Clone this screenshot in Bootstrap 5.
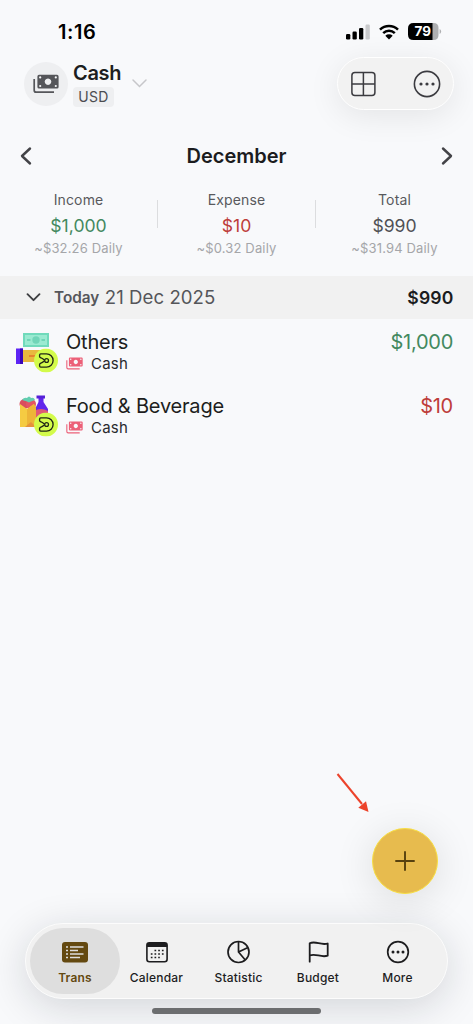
<!DOCTYPE html>
<html lang="en">
<head>
<meta charset="utf-8">
<meta name="viewport" content="width=device-width, initial-scale=1">
<title>Cash – December</title>
<link href="https://cdn.jsdelivr.net/npm/bootstrap@5.3.0/dist/css/bootstrap.min.css" rel="stylesheet">
<style>
  body { background: #f8f9fb; font-family: Inter, sans-serif; color: #1d1e20; overflow: hidden; }
  .phone { width: 473px; height: 1024px; overflow: hidden; }
  .phone svg { display: block; flex: none; overflow: visible; }
  .lh { line-height: 1; white-space: nowrap; }

  .status { height: 57px; padding: 6px 32px 0 58px; color: #000; }
  .clock { font-size: 20px; font-weight: 600; letter-spacing: .55px; }
  .wifi { margin: 0 9px; }
  .top { height: 53px; padding: 0 19px 0 24px; }
  .avatar { width: 44px; height: 44px; background: #eeeff1; color: #55565a; }
  .account { margin-left: 5px; padding-top: 2px; }
  .wallet { font-size: 20px; font-weight: 600; letter-spacing: -.3px; }
  .currency { font-size: 14px; background: #eeeff1; color: #4b4c50; border-radius: 4px; height: 20px; width: 41px; letter-spacing: .3px; }
  .caret { margin-left: 11px; }
  .tools { width: 117px; height: 53px; background: #f2f2f2; border: 1.5px solid #fff; color: #3b3b40; padding: 0 12px; box-shadow: 0 6px 32px rgba(0,0,0,.085); }

  .month { height: 44px; margin-top: 24px; padding: 0 20px; color: #434347; }
  .month-name { font-size: 20px; font-weight: 600; color: #1b1c1e; letter-spacing: -.02px; }
  .stats { height: 98px; padding-top: 15px; }
  .rule { width: 1px; height: 28px; background: #dcdddf; margin-top: 7px; }
  .stat-label { font-size: 14px; color: #58595d; letter-spacing: .15px; }
  .stat-value { font-size: 17.6px; color: #505155; margin-top: 10px; }
  .stat-daily { font-size: 13px; color: #a5a6a9; margin-top: 7px; letter-spacing: .15px; }
  .stat-value.in, .amount.in { color: #43895f; }
  .stat-value.out, .amount.out { color: #be3d3a; }

  .day { height: 43px; background: #f1f1f1; padding: 0 20px 0 26px; color: #55565a; }
  .day-today { font-size: 15.3px; font-weight: 600; margin-left: 13px; }
  .day-date { font-size: 18.6px; margin-left: 5.500px; letter-spacing: .05px; }
  .day-total { font-size: 17.6px; font-weight: 600; color: #1b1c1e; letter-spacing: .15px; margin-right: -.5px; }

  .entry { height: 63.5px; padding: 0 20px 0 15px; }
  .entry-pic { width: 51px; height: 46px; }
  .entry-name { font-size: 20px; letter-spacing: -.2px; margin-top: 13px; }
  .entry-wallet { font-size: 15px; margin-top: 4px; color: #2a2b2e; letter-spacing: .2px; }
  .amount { font-size: 20px; margin-top: 13px; letter-spacing: -.25px; }

  .fab { right: 35px; top: 828px; width: 66px; height: 66px; background: #e7bb4e; border: 1.5px solid #f8df43; color: #57410f; box-shadow: 0 6px 40px rgba(0,0,0,.12); }
  .pointer { left: 335px; top: 771px; }

  .tabs { width: 423px; height: 76px; margin: 0 auto 9px; background: #f1f1f1; border: 1.5px solid #fcfcfc; box-shadow: 0 8px 40px rgba(20,25,35,.16); padding: 4px; }
  .tab { height: 66px; color: #1d1d1f; font-size: 12px; font-weight: 500; letter-spacing: .2px; padding-top: 11px; }
  .tab svg { margin-bottom: 7px; }
  .tab.on { background: #dedede; color: #644910; font-weight: 600; }
  .home-bar { width: 169px; height: 6px; background: #6b6d6f; margin: 0 auto 10px; }
</style>
</head>
<body>
<svg width="0" height="0" class="position-absolute" aria-hidden="true">
  <symbol id="notes" viewBox="0 0 26 20">
    <path d="M1.200 5v11.200q0 2 2 2H21" fill="none" stroke="currentColor" stroke-width="1.700"/>
    <path fill-rule="evenodd" fill="currentColor" d="M6 .8h18q1.600 0 1.600 1.600v10.500q0 1.600-1.600 1.600h-18q-1.600 0-1.600-1.600v-10.500q0-1.600 1.600-1.600zM15 4.400a3.300 3.300 0 1 0 .01 0z"/>
    <g fill="#f8f9fb"><circle cx="7.200" cy="3.400" r="1.100"/><circle cx="22.800" cy="3.400" r="1.100"/><circle cx="7.200" cy="12" r="1.100"/><circle cx="22.800" cy="12" r="1.100"/></g>
  </symbol>
  <symbol id="coin" viewBox="0 0 24 24">
    <circle cx="12" cy="12" r="12" fill="#d3fb4b"/>
    <path d="M5.600 8V6.500q0-1.100 1.100-1.100h5.800a6.600 6.600 0 0 1 0 13.200H6.700q-1.100 0-1.100-1.100V16q0-.8.800-1.100 2.200-.8 3.600-2.100 1.200-1.200 2.300-1.200M5.600 8q0 .8.800 1.100 2.200.8 3.600 2.100 1.200 1.600 2.300 1.600" fill="none" stroke="#222817" stroke-width="1.350" stroke-linejoin="round"/>
    <circle cx="12.600" cy="12" r="1.900" fill="#d3fb4b" stroke="#222817" stroke-width="1.300"/>
  </symbol>
</svg>

<main class="phone position-relative d-flex flex-column">
  <div class="status d-flex align-items-center justify-content-between">
    <div class="clock lh">1:16</div>
    <div class="d-flex align-items-center">
      <svg width="24" height="16" viewBox="0 0 24 16"><rect x="0" y="10" width="4.300" height="5.500" rx="1.200"/><rect x="6.500" y="7.500" width="4.300" height="8" rx="1.200"/><rect x="13" y="4" width="4.300" height="11.500" rx="1.200"/><rect x="19.500" y=".5" width="4.300" height="15" rx="1.200" fill="#c9cacc"/></svg>
      <svg width="20" height="16" viewBox="0 0 20 16" class="wifi"><path d="M1 5.600a13 13 0 0 1 18 0M4.200 9.100a8.400 8.400 0 0 1 11.600 0" fill="none" stroke="#000" stroke-width="2.500"/><path d="M6.300 11.700a5.400 5.400 0 0 1 7.400 0L10 15.600z"/></svg>
      <svg width="33" height="17" viewBox="0 0 33 17"><path d="M24 0h1.500q5 0 5 5v7q0 5-5 5H24z" fill="#aeafb1"/><path d="M24.500 0H5.500Q0 0 0 5.500v6Q0 17 5.500 17h19z"/><path d="M31.600 6q1.500.8 1.500 2.500t-1.500 2.500z" fill="#aeafb1"/><text x="14.700" y="13.300" text-anchor="middle" font-size="13.500" font-weight="700" fill="#fff">79</text></svg>
    </div>
  </div>

  <header class="top d-flex align-items-center justify-content-between">
    <div class="d-flex align-items-center">
      <div class="avatar rounded-circle d-flex align-items-center justify-content-center"><svg width="26" height="20"><use href="#notes"/></svg></div>
      <div class="account">
        <div class="wallet lh">Cash</div>
        <div class="currency lh d-flex align-items-center justify-content-center mt-1">USD</div>
      </div>
      <svg width="15" height="9" viewBox="0 0 15 9" class="caret"><path d="m1 1 6.500 6.500L14 1" fill="none" stroke="#c6c7ca" stroke-width="1.500" stroke-linecap="round"/></svg>
    </div>
    <div class="tools rounded-pill d-flex align-items-center justify-content-between">
      <svg width="26" height="26" viewBox="0 0 26 26" fill="none" stroke="currentColor" stroke-width="1.500"><rect x="1.900" y="1.500" width="23" height="23" rx="3"/><path d="M13.400 1.500v23M1.900 13h23"/></svg>
      <svg width="28" height="28" viewBox="0 0 28 28"><circle cx="14" cy="14" r="12.600" fill="none" stroke="currentColor" stroke-width="1.600"/><g fill="currentColor"><circle cx="8" cy="14" r="1.600"/><circle cx="14" cy="14" r="1.600"/><circle cx="20" cy="14" r="1.600"/></g></svg>
    </div>
  </header>

  <div class="month d-flex align-items-center justify-content-between">
    <svg width="12" height="18" viewBox="0 0 12 18"><path d="M10 1.500 2 9l8 7.500" fill="none" stroke="currentColor" stroke-width="2.400" stroke-linecap="round" stroke-linejoin="round"/></svg>
    <div class="month-name lh">December</div>
    <svg width="12" height="18" viewBox="0 0 12 18"><path d="m2 1.500 8 7.500-8 7.500" fill="none" stroke="currentColor" stroke-width="2.400" stroke-linecap="round" stroke-linejoin="round"/></svg>
  </div>

  <section class="stats d-flex text-center">
    <div class="flex-fill w-100"><div class="stat-label lh">Income</div><div class="stat-value in lh">$1,000</div><div class="stat-daily lh">~$32.26 Daily</div></div>
    <div class="rule flex-shrink-0"></div>
    <div class="flex-fill w-100"><div class="stat-label lh">Expense</div><div class="stat-value out lh">$10</div><div class="stat-daily lh">~$0.32 Daily</div></div>
    <div class="rule flex-shrink-0"></div>
    <div class="flex-fill w-100"><div class="stat-label lh">Total</div><div class="stat-value lh">$990</div><div class="stat-daily lh">~$31.94 Daily</div></div>
  </section>

  <div class="day d-flex align-items-center">
    <svg width="15" height="9" viewBox="0 0 15 9"><path d="m1.500 1.200 6 6 6-6" fill="none" stroke="#3e3f42" stroke-width="1.900" stroke-linecap="round" stroke-linejoin="round"/></svg>
    <span class="day-today lh">Today</span>
    <span class="day-date lh">21 Dec 2025</span>
    <span class="day-total lh ms-auto">$990</span>
  </div>

  <div class="entry d-flex">
    <svg class="entry-pic mt-2" viewBox="0 0 51 46">
      <rect x="8" y="6" width="26" height="14" fill="#70dabb"/><rect x="10" y="8" width="22" height="10" fill="#9aead1"/><circle cx="21" cy="13" r="3.700" fill="#70d5b8"/><path d="M12 13h3.500M26.500 13H30" stroke="#70d5b8" stroke-width="1.800"/>
      <rect x="7" y="23" width="21" height="12" fill="#e9b83f"/><path d="M14 29h9" stroke="#e7842f" stroke-width="2"/>
      <rect x="1" y="21.500" width="7" height="15.500" fill="#5d24f4"/><rect x="5" y="21.500" width="3" height="15.500" fill="#3905b9"/>
      <use href="#coin" x="19" y="21.500" width="24" height="24"/>
    </svg>
    <div>
      <div class="entry-name lh">Others</div>
      <div class="entry-wallet lh d-flex align-items-center"><svg width="17" height="13" class="me-2" color="#ec6078"><use href="#notes"/></svg>Cash</div>
    </div>
    <div class="amount in lh ms-auto">$1,000</div>
  </div>
  <div class="entry d-flex">
    <svg class="entry-pic mt-2" viewBox="0 0 51 46">
      <path d="M23.500 7h5v4l4.500 7v15H20V18l3.500-7z" fill="#6126eb"/><path d="M19 20q7-4 14 0v13H19z" fill="#df5876"/><rect x="21.500" y="4.500" width="8.500" height="3" fill="#5520d8"/>
      <circle cx="9.500" cy="13" r="5" fill="#d94d5e"/><circle cx="16" cy="13" r="5" fill="#e45464"/><path d="M7 9q2-3 5-2 2-3 4 0 3-1 4 2l-4 1.500-2 1-2-1z" fill="#62ceb0"/>
      <path d="m5 13 7 5 7-5v23H5z" fill="#f5cb42"/><path d="m12 18 7-5 2 3v20H12z" fill="#edb538"/><path d="m10 36 6-5 5 5z" fill="#e5923b"/>
      <use href="#coin" x="19" y="21.500" width="24" height="24"/>
    </svg>
    <div>
      <div class="entry-name lh">Food &amp; Beverage</div>
      <div class="entry-wallet lh d-flex align-items-center"><svg width="17" height="13" class="me-2" color="#ec6078"><use href="#notes"/></svg>Cash</div>
    </div>
    <div class="amount out lh ms-auto">$10</div>
  </div>

  <svg class="pointer position-absolute" width="36" height="43" viewBox="0 0 36 43"><path d="M2.500 3 27 33" stroke="#ec432b" stroke-width="2" fill="none"/><path d="M33.500 41 23.300 36.800 31 30.300z" fill="#ec432b"/></svg>
  <button class="fab position-absolute rounded-circle p-0 d-flex align-items-center justify-content-center" aria-label="Add"><svg width="20" height="20" viewBox="0 0 20 20"><path d="M10 1v18M1 10h18" stroke="currentColor" stroke-width="1.900" stroke-linecap="round"/></svg></button>

  <nav class="tabs rounded-pill d-flex mt-auto">
    <div class="tab on rounded-pill lh d-flex flex-column align-items-center" style="width:90px">
      <svg width="26" height="26" viewBox="0 0 26 26"><rect x="0" y="3" width="26" height="20.500" rx="3" fill="currentColor"/><path d="M8 8h13.500M8 11.500h8M8 15h13.500M8 18.500h10" stroke="#dedede" stroke-width="1.300"/><path d="M4 8h2M4 11.500h2M4 15h2M4 18.500h2" stroke="#dedede" stroke-width="1.600"/></svg>Trans</div>
    <div class="tab lh d-flex flex-column align-items-center" style="width:73px">
      <svg width="24" height="26" viewBox="0 0 24 26"><rect x="1.900" y="3.800" width="20.200" height="18.900" rx="2.500" fill="none" stroke="currentColor" stroke-width="1.600"/><path d="M1.900 8V6.300q0-2.500 2.500-2.500h15.200q2.500 0 2.500 2.500V8z" fill="currentColor"/><g stroke="currentColor" stroke-width="1.700" stroke-dasharray="1.700 2"><path d="M9.500 11.500h10M5.800 15h13.200M5.800 18.500h9"/></g></svg>Calendar</div>
    <div class="tab lh d-flex flex-column align-items-center" style="width:91px">
      <svg width="26" height="26" viewBox="0 0 26 26" fill="none" stroke="currentColor" stroke-width="1.700"><circle cx="12.500" cy="13" r="10.500"/><path d="M12.500 2.500V13l6.800 8M12.500 13 22 8.500"/></svg>Statistic</div>
    <div class="tab lh d-flex flex-column align-items-center" style="width:68px">
      <svg width="26" height="26" viewBox="0 0 26 26" fill="none" stroke="currentColor" stroke-width="1.800" stroke-linecap="round" stroke-linejoin="round"><path d="M4.700 22.700V4.300c6-3 11 2.500 18 .2v12.200c-7 2.400-12-3-18-.2"/></svg>Budget</div>
    <div class="tab lh d-flex flex-column align-items-center" style="width:91px">
      <svg width="26" height="26" viewBox="0 0 26 26"><circle cx="13" cy="13" r="10.300" fill="none" stroke="currentColor" stroke-width="1.700"/><g fill="currentColor"><circle cx="8" cy="13" r="1.500"/><circle cx="13" cy="13" r="1.500"/><circle cx="18" cy="13" r="1.500"/></g></svg>More</div>
  </nav>
  <div class="home-bar rounded-pill flex-shrink-0"></div>
</main>
<script src="https://cdn.jsdelivr.net/npm/bootstrap@5.3.0/dist/js/bootstrap.bundle.min.js"></script>
</body>
</html>
